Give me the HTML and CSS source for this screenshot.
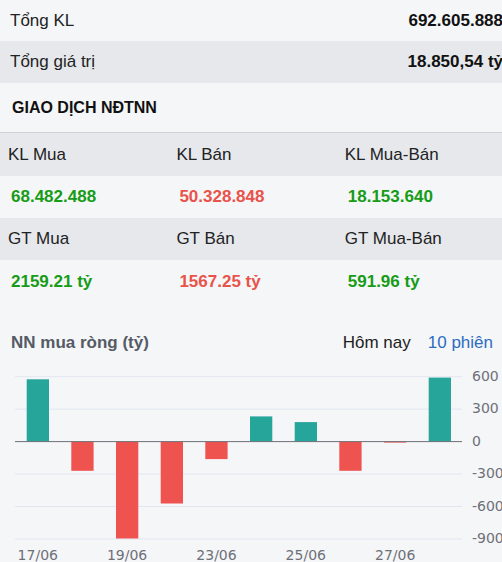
FILE: index.html
```html
<!DOCTYPE html>
<html lang="vi">
<head>
  <meta charset="UTF-8">
  <title>Giao dịch NĐTNN</title>
  <link rel="stylesheet" href="styles.css">
</head>
<body>

<div class="panel">
  <div class="sum-row first">
    <span>Tổng KL</span>
    <b>692.605.888</b>
  </div>
  <div class="sum-row alt">
    <span>Tổng giá trị</span>
    <b>18.850,54 tỷ</b>
  </div>

  <div class="sec-title">GIAO DỊCH NĐTNN</div>

  <div class="grid3 head tall">
    <span>KL Mua</span>
    <span>KL Bán</span>
    <span>KL Mua-Bán</span>
  </div>
  <div class="grid3 vals">
    <b class="up">68.482.488</b>
    <b class="down">50.328.848</b>
    <b class="up">18.153.640</b>
  </div>
  <div class="grid3 head">
    <span>GT Mua</span>
    <span>GT Bán</span>
    <span>GT Mua-Bán</span>
  </div>
  <div class="grid3 vals tall">
    <b class="up">2159.21 tỷ</b>
    <b class="down">1567.25 tỷ</b>
    <b class="up">591.96 tỷ</b>
  </div>

  <div class="chart-head">
    <span class="chart-title">NN mua ròng (tỷ)</span>
    <div class="tabs">
      <span>Hôm nay</span>
      <span class="active">10 phiên</span>
    </div>
  </div>

  <svg class="chart" width="502" height="203" viewBox="0 0 502 203">
    <g class="grid">
      <line x1="15" x2="462" y1="17.7" y2="17.7"/>
      <line x1="15" x2="462" y1="50.15" y2="50.15"/>
      <line x1="15" x2="462" y1="115.05" y2="115.05"/>
      <line x1="15" x2="462" y1="147.5" y2="147.5"/>
      <line x1="15" x2="462" y1="179.95" y2="179.95"/>
    </g>

    <g class="bars">
      <rect class="pos" x="26.7" y="20.3" width="22.3" height="62.3"/>
      <rect class="neg" x="71.3" y="82.6" width="22.3" height="29.2"/>
      <rect class="neg" x="116" y="82.6" width="22.3" height="96.9"/>
      <rect class="neg" x="160.7" y="82.6" width="22.3" height="61.9"/>
      <rect class="neg" x="205.3" y="82.6" width="22.3" height="17.5"/>
      <rect class="pos" x="250" y="57.4" width="22.3" height="25.2"/>
      <rect class="pos" x="294.7" y="63.1" width="22.3" height="19.5"/>
      <rect class="neg" x="339.3" y="82.6" width="22.3" height="29.2"/>
      <rect class="neg" x="384" y="82.6" width="22.3" height="1"/>
      <rect class="pos" x="428.7" y="18.6" width="22.3" height="64"/>
    </g>

    <line class="axis" x1="15" x2="462" y1="82.6" y2="82.6"/>

    <g class="ylabels">
      <text x="472" y="17.7">600</text>
      <text x="472" y="50.15">300</text>
      <text x="472" y="82.6">0</text>
      <text x="472" y="115.05">-300</text>
      <text x="472" y="147.5">-600</text>
      <text x="472" y="179.95">-900</text>
    </g>

    <g class="xlabels">
      <text x="37.8" y="201">17/06</text>
      <text x="127.1" y="201">19/06</text>
      <text x="216.5" y="201">23/06</text>
      <text x="305.8" y="201">25/06</text>
      <text x="395.2" y="201">27/06</text>
    </g>
  </svg>
</div>

</body>
</html>
```

FILE: styles.css
```css
body,
html {
  margin: 0;
  overflow: hidden;
}

body {
  background: #f5f6f8;
  color: #222;
  font-family: 'Liberation Sans', Arial, sans-serif;
  font-size: 17px;
}

.panel {
  width: 505px;
}

.sum-row {
  display: flex;
  justify-content: space-between;
  align-items: center;
  height: 42px;
  padding: 0 2px 0 10px;
}

.sum-row.first {
  height: 41px;
}

.sum-row b {
  color: #111;
}

.alt,
.head {
  background: #e6e8ec;
}

.sec-title {
  height: 49px;
  line-height: 50px;
  padding-left: 12px;
  font-size: 16px;
  font-weight: bold;
  color: #111;
  border-bottom: 1px solid #cfd2d8;
}

.grid3 {
  display: grid;
  grid-template-columns: 168.4px 168.4px 168.4px;
  align-items: center;
  height: 42px;
}

.grid3.tall {
  height: 43px;
}

.head span {
  padding-left: 8px;
}

.vals b {
  padding-left: 11px;
}

.up {
  color: #169c17;
}

.down {
  color: #e8534a;
}

.chart-head {
  display: flex;
  justify-content: space-between;
  align-items: center;
  height: 32px;
  margin-top: 24px;
  padding: 0 12px 0 11px;
}

.chart-title {
  font-weight: bold;
  color: #555b65;
}

.tabs {
  display: flex;
  gap: 17px;
}

.tabs .active {
  color: #2d6cc0;
}

.chart {
  display: block;
}

.grid line {
  stroke: #e0e6f1;
  stroke-width: 1;
}

.axis {
  stroke: #6e7079;
  stroke-width: 1;
}

.pos {
  fill: #26a69a;
}

.neg {
  fill: #ef5350;
}

.chart text {
  font-family: 'DejaVu Sans', sans-serif;
  font-size: 14px;
  fill: #6e7079;
}

.ylabels text {
  dominant-baseline: middle;
}

.xlabels text {
  text-anchor: middle;
}
```
